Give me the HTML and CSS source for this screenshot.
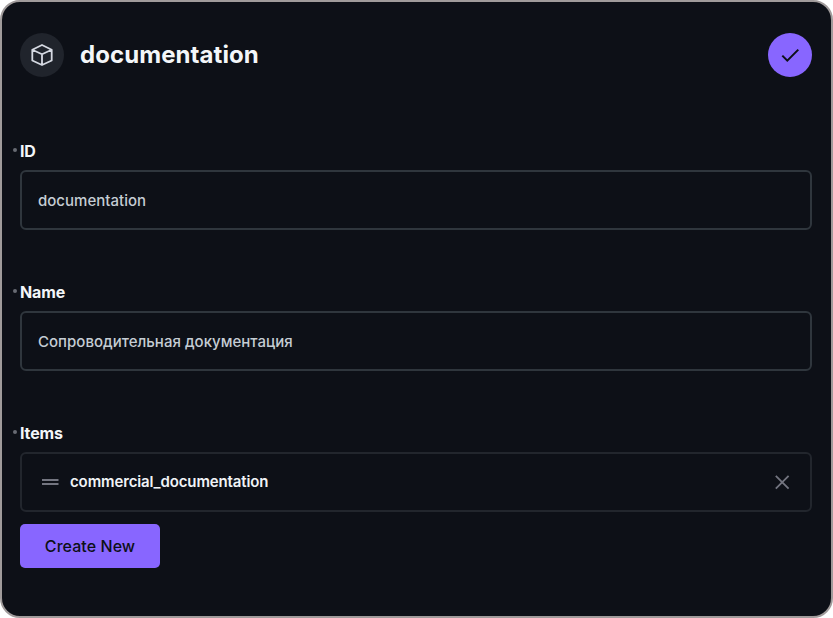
FILE: index.html
```html
<!DOCTYPE html>
<html lang="en">
<head>
<meta charset="utf-8">
<title>documentation</title>
<link rel="stylesheet" href="styles.css">
</head>
<body>
<main class="panel">
  <header class="header">
    <span class="avatar">
      <svg width="24" height="24" viewBox="0 0 24 24" fill="none" stroke="currentColor" stroke-width="1.8" stroke-linejoin="round"><path d="M12 2 21.700 6.700v10.800L12 22 2.300 17.500V6.700zM2.300 6.700 12 11.200l9.700-4.500M12 11.200V22"/></svg>
    </span>
    <h1 class="title">documentation</h1>
    <button class="save" aria-label="Save">
      <svg width="24" height="24" viewBox="0 0 24 24" fill="none" stroke="currentColor" stroke-width="2"><path d="M4.300 12.600l5 5L20.300 6.600"/></svg>
    </button>
  </header>
  <section class="field">
    <label class="label">ID</label>
    <div class="input">documentation</div>
  </section>
  <section class="field">
    <label class="label">Name</label>
    <div class="input">Сопроводительная документация</div>
  </section>
  <section class="field">
    <label class="label">Items</label>
    <div class="item">
      <svg width="18" height="8" viewBox="0 0 18 8" stroke="currentColor" stroke-width="1.8"><path d="M0 2H16.500M0 6H16.500"/></svg>
      <span class="item-name">commercial_documentation</span>
      <svg width="16" height="16" viewBox="0 0 16 16" stroke="currentColor" stroke-width="1.8"><path d="M1.800 1.800l12.800 12.800M14.600 1.800L1.800 14.600"/></svg>
    </div>
    <button class="create">Create New</button>
  </section>
</main>
</body>
</html>
```
FILE: styles.css
```css
* { box-sizing: border-box; }
body { margin: 0; background: #fff; font-family: Inter, sans-serif; color: #f3f6f9; }
.panel { width: 833px; height: 618px; padding: 31px 19px 0 18px; background: #0d1017; border: 2px solid #a09b9b; border-radius: 20px; }
.header { display: flex; align-items: center; height: 44px; margin-bottom: 64px; }
.avatar { display: flex; align-items: center; justify-content: center; width: 44px; height: 44px; border-radius: 50%; background: #20242c; color: #d5d9e2; }
.title { flex: 1; margin: 0 0 0 16px; font-size: 24px; line-height: 32px; font-weight: 700; letter-spacing: 0.08px; }
.save { display: flex; align-items: center; justify-content: center; width: 44px; height: 44px; padding: 0; border: 0; border-radius: 50%; background: #8866ff; color: #0d1017; }
.field { margin-bottom: 52px; }
.label { position: relative; display: block; height: 20px; margin-bottom: 9px; font-size: 16px; line-height: 20px; font-weight: 700; letter-spacing: -0.12px; }
.label::before { content: ""; position: absolute; left: -7px; top: 7px; width: 4px; height: 4px; border-radius: 50%; background: #676b73; }
.input, .item { display: flex; align-items: center; height: 60px; padding: 0 16px; border: 2px solid #2f363d; border-radius: 6px; font-size: 15px; font-weight: 500; letter-spacing: 0.02px; color: #c5cdd4; }
.item { padding: 0 20px; border-color: #22262d; color: #737580; }
.item-name { flex: 1; margin-left: 10px; padding-bottom: 1px; font-weight: 600; letter-spacing: -0.12px; color: #f0f3f6; }
.create { display: block; width: 140px; height: 44px; margin-top: 12px; padding: 0; border: 0; border-radius: 5px; background: #8866ff; color: #0d1017; font: 500 16px Inter, sans-serif; letter-spacing: 0.06px; }
```
